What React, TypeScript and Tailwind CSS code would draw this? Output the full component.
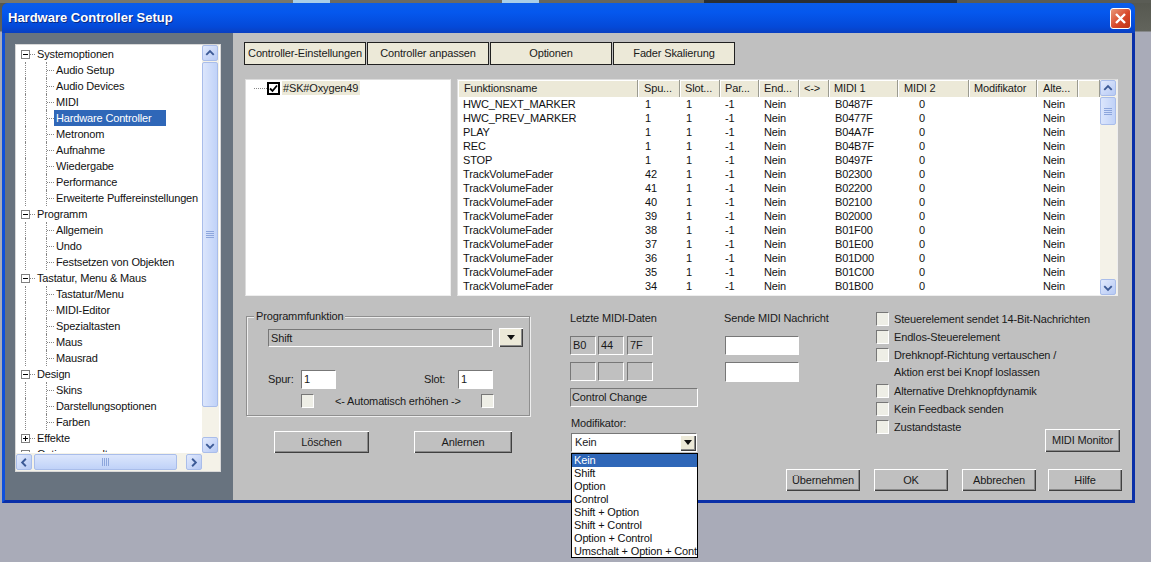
const TREE: [number, string, boolean?][] = [
  [0, "Systemoptionen"],
  [1, "Audio Setup"],
  [1, "Audio Devices"],
  [1, "MIDI"],
  [1, "Hardware Controller", true],
  [1, "Metronom"],
  [1, "Aufnahme"],
  [1, "Wiedergabe"],
  [1, "Performance"],
  [1, "Erweiterte Puffereinstellungen"],
  [0, "Programm"],
  [1, "Allgemein"],
  [1, "Undo"],
  [1, "Festsetzen von Objekten"],
  [0, "Tastatur, Menu & Maus"],
  [1, "Tastatur/Menu"],
  [1, "MIDI-Editor"],
  [1, "Spezialtasten"],
  [1, "Maus"],
  [1, "Mausrad"],
  [0, "Design"],
  [1, "Skins"],
  [1, "Darstellungsoptionen"],
  [1, "Farben"],
  [2, "Effekte"],
  [2, "Optionsverwaltung"],
];

const ROWS: [string, string, string][] = [
  ["HWC_NEXT_MARKER", "1", "B0487F"],
  ["HWC_PREV_MARKER", "1", "B0477F"],
  ["PLAY", "1", "B04A7F"],
  ["REC", "1", "B04B7F"],
  ["STOP", "1", "B0497F"],
  ["TrackVolumeFader", "42", "B02300"],
  ["TrackVolumeFader", "41", "B02200"],
  ["TrackVolumeFader", "40", "B02100"],
  ["TrackVolumeFader", "39", "B02000"],
  ["TrackVolumeFader", "38", "B01F00"],
  ["TrackVolumeFader", "37", "B01E00"],
  ["TrackVolumeFader", "36", "B01D00"],
  ["TrackVolumeFader", "35", "B01C00"],
  ["TrackVolumeFader", "34", "B01B00"],
];

const HEADERS: [string, string][] = [
  ["Funktionsname", "w-[180px] pl-[6px]"],
  ["Spu...", "w-[42px] pl-[6px]"],
  ["Slot...", "w-[40px] pl-[5px]"],
  ["Par...", "w-[39px] pl-[5px]"],
  ["End...", "w-[40px] pl-[5px]"],
  ["<->", "w-[30px] pl-[5px]"],
  ["MIDI 1", "w-[69px] pl-[5px]"],
  ["MIDI 2", "w-[71px] pl-[6px]"],
  ["Modifikator", "w-[68px] pl-[5px]"],
  ["Alte...", "w-[41px] pl-[6px]"],
  ["", "flex-1"],
];

const MENU = ["Kein", "Shift", "Option", "Control", "Shift + Option", "Shift + Control", "Option + Control", "Umschalt + Option + Control"];

const TOP_STRIP: [string, string][] = [
  ["w-[293px]", "bg-[#77776c]"],
  ["w-[37px]", "bg-[#a9cfe8]"],
  ["w-[172px]", "bg-[#6a6a62]"],
  ["w-[37px]", "bg-[#a9cfe8]"],
  ["w-[165px]", "bg-[#66665e]"],
  ["w-[253px]", "bg-[#2a2f33]"],
  ["flex-1", "bg-[#5a5c55]"],
];

const RAISED = "bg-[#c0c0c0] shadow-[inset_1px_1px_0_#fff,inset_-1px_-1px_0_#404040,inset_-2px_-2px_0_#8a8a8a]";
const RAISED_BEIGE = "bg-[#ece9d8] shadow-[inset_1px_1px_0_#fff,inset_-1px_-1px_0_#404040,inset_-2px_-2px_0_#8a8a8a]";
const SUNKEN = "border-t border-l border-t-[#777] border-l-[#777] border-r border-b border-r-white border-b-white";

function Arrow({ dir }: { dir: "up" | "down" | "left" | "right" }) {
  const d = {
    up: "M3.5 9 L7.5 5 L11.5 9",
    down: "M3.5 6 L7.5 10 L11.5 6",
    left: "M9.5 3.5 L5.5 7.5 L9.5 11.5",
    right: "M5.5 3.5 L9.5 7.5 L5.5 11.5",
  }[dir];
  return (
    <div className="w-[16px] h-[16px] shrink-0 rounded-[2px] bg-[linear-gradient(135deg,#e2eafd,#b6c9f4)] border border-[#a9bdea] flex items-center justify-center">
      <svg width="15" height="15" viewBox="0 0 15 15" fill="none">
        <path d={d} stroke="#3c5a96" strokeWidth="2" />
      </svg>
    </div>
  );
}

function Grip({ vertical }: { vertical: boolean }) {
  return (
    <svg width={vertical ? 8 : 9} height={vertical ? 9 : 8} viewBox={vertical ? "0 0 8 9" : "0 0 9 8"}>
      {[1, 3, 5, 7].map((p) =>
        vertical ? (
          <rect key={p} x="0" y={p} width="8" height="1" fill="#8da6dc" />
        ) : (
          <rect key={p} x={p} y="0" width="1" height="8" fill="#8da6dc" />
        )
      )}
    </svg>
  );
}

function VScroll({ thumb, className }: { thumb: string; className: string }) {
  return (
    <div className={`w-[17px] shrink-0 flex flex-col bg-[#f4f2e8] ${className}`}>
      <Arrow dir="up" />
      <div className="flex-1 pt-[1px]">
        <div className={`w-[16px] ${thumb} rounded-[2px] border border-[#a9bdea] bg-[linear-gradient(90deg,#dce6fc,#c0d2f8)] flex items-center justify-center`}>
          <Grip vertical />
        </div>
      </div>
      <Arrow dir="down" />
    </div>
  );
}

function TreeRow({ level, text, selected }: { level: number; text: string; selected?: boolean }) {
  if (level === 1) {
    return (
      <div className="flex h-[16px] items-center">
        <div className="w-[9px] self-stretch shrink-0" />
        <div className="w-[21px] self-stretch shrink-0 border-l border-dotted border-l-[#888]" />
        <div className="w-[8px] shrink-0 self-stretch flex items-center border-l border-dotted border-l-[#888]">
          <div className="w-full border-t border-dotted border-t-[#888]" />
        </div>
        <div className={`px-[2px] h-[16px] leading-[16px] whitespace-nowrap ${selected ? "bg-[#2f67b8] text-white w-[112px]" : ""}`}>{text}</div>
      </div>
    );
  }
  const plus = level === 2;
  return (
    <div className="flex h-[16px] items-center">
      <div className="w-[5px] shrink-0" />
      <div className="w-[9px] h-[9px] shrink-0 border border-[#808080] bg-white flex items-center justify-center relative">
        <div className="w-[5px] h-[1px] bg-black" />
        {plus && <div className="w-[1px] h-[5px] bg-black absolute" />}
      </div>
      <div className="w-[5px] shrink-0 border-t border-dotted border-t-[#888]" />
      <div className="pl-[2px] leading-[16px] whitespace-nowrap">{text}</div>
    </div>
  );
}

function Check({ className = "" }: { className?: string }) {
  return <div className={`w-[13px] h-[14px] shrink-0 bg-[#eeeee6] ${SUNKEN} ${className}`} />;
}

function Raised({ text, className }: { text: string; className: string }) {
  return <div className={`flex items-center justify-center shrink-0 ${RAISED} ${className}`}>{text}</div>;
}

function Cell({ text = "", w, mr = "" }: { text?: string; w: string; mr?: string }) {
  return <div className={`h-[19px] leading-[17px] pl-[2px] ${w} ${mr} ${SUNKEN}`}>{text}</div>;
}

function DownArrow() {
  return (
    <svg width="8" height="5" viewBox="0 0 8 5">
      <path d="M0 0 H8 L4 5 Z" fill="#111" />
    </svg>
  );
}

function CheckLine({ text, mb, second }: { text: string; mb: string; second?: string }) {
  return (
    <div className={mb}>
      <div className="flex items-center gap-[5px] h-[14px]">
        <Check />
        <span className="whitespace-nowrap">{text}</span>
      </div>
      {second && <div className="pl-[18px] mt-[3px] h-[14px] leading-[14px]">{second}</div>}
    </div>
  );
}

export default function App() {
  return (
    <div className="relative w-[1151px] h-[562px] overflow-hidden font-['Liberation_Sans',Arial,sans-serif] text-[11px] tracking-[-0.15px] text-[#1a1a1a] bg-[linear-gradient(180deg,#55574f_0,#62645c_31px,#a9abb8_32px,#a9abb8_100%)]">
      <div className="flex h-[3px]">
        {TOP_STRIP.map(([w, c], i) => (
          <div key={i} className={`${w} ${c}`} />
        ))}
      </div>
      <div className="ml-[2px] w-[1133px] h-[500px] flex flex-col rounded-t-[6px] bg-[#0a45c8]">
        {/* title bar */}
        <div className="h-[30px] shrink-0 flex items-center justify-between pl-[6px] pr-[4px] rounded-t-[6px] bg-[linear-gradient(180deg,#0a5ce8_0,#0558ee_30%,#0449d8_80%,#0a3fc0_100%)]">
          <span className="text-white font-bold text-[13px] tracking-[0px] [text-shadow:1px_1px_0_#0a2a80]">Hardware Controller Setup</span>
          <div className="w-[21px] h-[21px] rounded-[3px] border border-white bg-[linear-gradient(135deg,#e9997a,#d8482a_55%,#bd3416)] flex items-center justify-center">
            <svg width="13" height="13" viewBox="0 0 13 13">
              <path d="M2 2 L11 11 M11 2 L2 11" stroke="#fff" strokeWidth="2.4" />
            </svg>
          </div>
        </div>
        {/* client */}
        <div className="flex-1 flex border-l-[3px] border-l-[#0f50dc] border-r-[3px] border-r-[#0a2fa8] border-b-[3px] border-b-[#0a2fa8] min-h-0">
          {/* sidebar */}
          <div className="w-[228px] shrink-0 bg-[#68737f] pl-[10px] pt-[11px]">
            <div className="w-[206px] h-[428px] bg-white border border-[#d8d8d8] flex flex-col">
              <div className="flex flex-1 min-h-0">
                <div className="flex-1 pt-[1px] overflow-hidden h-[407px] text-[#111]">
                  {TREE.map(([l, t, s]) => (
                    <TreeRow key={t} level={l} text={t} selected={s} />
                  ))}
                </div>
                <VScroll thumb="h-[345px]" className="mr-[1px]" />
              </div>
              <div className="h-[18px] flex items-center bg-[#f4f2e8] pr-[18px] shrink-0">
                <Arrow dir="left" />
                <div className="w-[143px] h-[16px] ml-[2px] rounded-[2px] border border-[#a9bdea] bg-[linear-gradient(180deg,#dce6fc,#c0d2f8)] flex items-center justify-center">
                  <Grip vertical={false} />
                </div>
                <div className="flex-1" />
                <Arrow dir="right" />
              </div>
            </div>
          </div>
          {/* main */}
          <div className="flex-1 bg-[#c0c0c0] pl-[11px] pt-[9px] min-w-0">
            {/* tabs */}
            <div className="flex h-[23px]">
              {[
                ["Controller-Einstellungen", "w-[122px]"],
                ["Controller anpassen", "w-[122px] ml-[1px]"],
                ["Optionen", "w-[122px] ml-[1px]"],
                ["Fader Skalierung", "w-[122px] ml-[1px]"],
              ].map(([t, c]) => (
                <div key={t} className={`flex items-center justify-center bg-[#ece9d8] border border-[#202020] whitespace-nowrap ${c}`}>
                  {t}
                </div>
              ))}
            </div>
            {/* lists */}
            <div className="flex mt-[14px] ml-[1px] h-[217px]">
              <div className="w-[206px] shrink-0 bg-white border border-t-[#dcdcdc] border-l-[#dcdcdc] border-r-[#eee] border-b-[#eee] pl-[8px] pt-[1px]">
                <div className="flex items-center h-[14px]">
                  <div className="w-[13px] border-t border-dotted border-t-[#888]" />
                  <div className="w-[13px] h-[13px] border-2 border-black flex items-center justify-center bg-white">
                    <svg width="9" height="9" viewBox="0 0 9 9" fill="none">
                      <path d="M1 4.5 L3.5 7 L8 1.5" stroke="#000" strokeWidth="1.8" />
                    </svg>
                  </div>
                  <div className="ml-[2px] bg-[#ece9d8] h-[14px] leading-[14px] px-[1px] w-[78px] whitespace-nowrap">#SK#Oxygen49</div>
                </div>
              </div>
              <div className="w-[661px] ml-[6px] shrink-0 bg-white border border-t-[#dcdcdc] border-l-[#dcdcdc] border-r-[#eee] border-b-[#eee] flex">
                <div className="flex-1 min-w-0 flex flex-col">
                  <div className="h-[17px] flex bg-[#ece9d8] shrink-0">
                    {HEADERS.map(([t, c], i) => (
                      <div key={i} className={`leading-[16px] border-r border-r-[#9a9a90] shadow-[inset_1px_1px_0_#fff] whitespace-nowrap ${c}`}>
                        {t}
                      </div>
                    ))}
                  </div>
                  {ROWS.map(([n, sp, m], i) => (
                    <div key={i} className="flex h-[14px] leading-[14px] text-[#111]">
                      <div className="w-[180px] pl-[5px]">{n}</div>
                      <div className="w-[42px] pl-[7px]">{sp}</div>
                      <div className="w-[40px] pl-[6px]">1</div>
                      <div className="w-[39px] pl-[5px]">-1</div>
                      <div className="w-[40px] pl-[5px]">Nein</div>
                      <div className="w-[30px]" />
                      <div className="w-[69px] pl-[6px]">{m}</div>
                      <div className="w-[71px] pl-[21px]">0</div>
                      <div className="w-[68px]" />
                      <div className="w-[41px] pl-[6px]">Nein</div>
                    </div>
                  ))}
                </div>
                <VScroll thumb="h-[28px]" className="" />
              </div>
            </div>
            {/* bottom */}
            <div className="flex mt-[20px] ml-[2px]">
              {/* Programmfunktion */}
              <div className="w-[284px] shrink-0">
                <div className="relative h-[100px] border border-[#8f8f8f] shadow-[inset_1px_1px_0_#eee,1px_1px_0_#eee] pl-[21px] pt-[11px]">
                  <div className="absolute left-[7px] -top-[7px] bg-[#c0c0c0] px-[2px] leading-[13px]">Programmfunktion</div>
                  <div className="flex items-center">
                    <div className={`w-[225px] h-[18px] leading-[16px] pl-[2px] ${SUNKEN}`}>Shift</div>
                    <div className={`ml-[6px] w-[24px] h-[19px] flex items-center justify-center ${RAISED_BEIGE}`}>
                      <DownArrow />
                    </div>
                  </div>
                  <div className="flex items-center mt-[23px]">
                    <span className="w-[33px]">Spur:</span>
                    <div className={`w-[35px] h-[19px] bg-white leading-[17px] pl-[2px] ${SUNKEN}`}>1</div>
                    <span className="ml-[88px] w-[34px]">Slot:</span>
                    <div className={`w-[35px] h-[19px] bg-white leading-[17px] pl-[2px] ${SUNKEN}`}>1</div>
                  </div>
                  <div className="flex items-center mt-[4px] pl-[33px]">
                    <Check />
                    <span className="ml-[21px] w-[146px] whitespace-nowrap">{"<- Automatisch erhöhen ->"}</span>
                    <Check />
                  </div>
                </div>
                <div className="flex mt-[15px] ml-[28px] gap-[45px]">
                  <Raised text="Löschen" className="w-[95px] h-[22px]" />
                  <Raised text="Anlernen" className="w-[98px] h-[22px]" />
                </div>
              </div>
              {/* MIDI data */}
              <div className="w-[129px] ml-[40px] shrink-0 relative">
                <div className="h-[13px] leading-[13px] -mt-[4px]">Letzte MIDI-Daten</div>
                <div className="flex mt-[11px]">
                  <Cell text="B0" w="w-[26px]" mr="mr-[2px]" />
                  <Cell text="44" w="w-[26px]" mr="mr-[3px]" />
                  <Cell text="7F" w="w-[26px]" />
                </div>
                <div className="flex mt-[7px]">
                  <Cell w="w-[26px]" mr="mr-[2px]" />
                  <Cell w="w-[26px]" mr="mr-[3px]" />
                  <Cell w="w-[26px]" />
                </div>
                <div className={`mt-[7px] h-[19px] w-[128px] leading-[17px] pl-[1px] ${SUNKEN}`}>Control Change</div>
                <div className="mt-[10px] h-[13px] leading-[13px] pl-[1px]">Modifikator:</div>
                <div className={`ml-[1px] mt-[3px] w-[126px] h-[19px] bg-white flex items-center justify-between pl-[3px] ${SUNKEN}`}>
                  <span>Kein</span>
                  <div className={`w-[16px] h-[16px] flex items-center justify-center ${RAISED_BEIGE}`}>
                    <DownArrow />
                  </div>
                </div>
                <div className="absolute left-[1px] top-[137px] w-[127px] h-[105px] bg-white border border-black overflow-hidden z-10 text-[#111]">
                  {MENU.map((m, i) => (
                    <div key={m} className={`h-[13px] leading-[13px] pl-[2px] whitespace-nowrap ${i === 0 ? "bg-[#2f67b8] text-white" : ""}`}>
                      {m}
                    </div>
                  ))}
                </div>
              </div>
              {/* right */}
              <div className="ml-[25px] w-[398px] shrink-0">
                <div className="flex">
                  <div className="w-[152px] shrink-0">
                    <div className="h-[13px] leading-[13px] -mt-[4px] whitespace-nowrap">Sende MIDI Nachricht</div>
                    <div className={`ml-[1px] mt-[11px] w-[74px] h-[19px] bg-white ${SUNKEN}`} />
                    <div className={`ml-[1px] mt-[7px] w-[74px] h-[20px] bg-white ${SUNKEN}`} />
                  </div>
                  <div className="flex-1 -mt-[4px]">
                    <CheckLine text="Steuerelement sendet 14-Bit-Nachrichten" mb="mb-[4px]" />
                    <CheckLine text="Endlos-Steuerelement" mb="mb-[4px]" />
                    <CheckLine text="Drehknopf-Richtung vertauschen /" mb="mb-[5px]" second="Aktion erst bei Knopf loslassen" />
                    <CheckLine text="Alternative Drehknopfdynamik" mb="mb-[4px]" />
                    <CheckLine text="Kein Feedback senden" mb="mb-[4px]" />
                    <CheckLine text="Zustandstaste" mb="" />
                    <div className="flex justify-end -mt-[5px] mr-[2px]">
                      <Raised text="MIDI Monitor" className="w-[75px] h-[23px]" />
                    </div>
                  </div>
                </div>
                <div className="flex mt-[17px] ml-[62px]">
                  <Raised text="Übernehmen" className="w-[74px] h-[22px]" />
                  <Raised text="OK" className="w-[74px] h-[22px] ml-[14px]" />
                  <Raised text="Abbrechen" className="w-[74px] h-[22px] ml-[14px]" />
                  <Raised text="Hilfe" className="w-[74px] h-[22px] ml-[12px]" />
                </div>
              </div>
            </div>
          </div>
        </div>
      </div>
    </div>
  );
}
